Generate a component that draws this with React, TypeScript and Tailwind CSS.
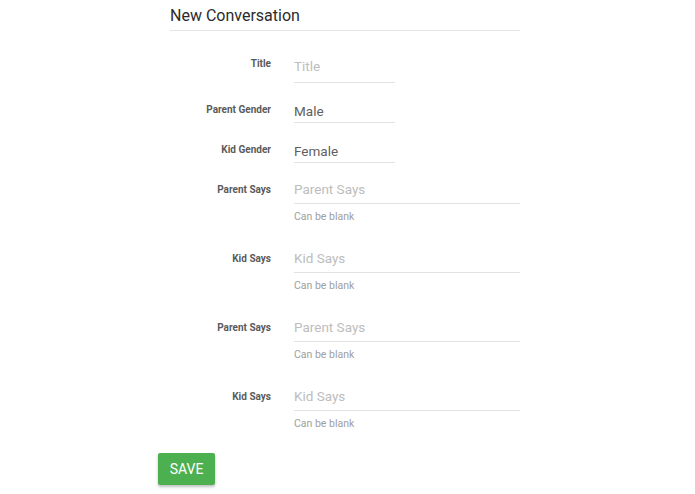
import React from 'react';

interface FieldProps {
  label: string;
  text: string;
  filled?: boolean;
  wide?: boolean;
  hint?: string;
  boxClass: string;
  labelClass: string;
  rowClass: string;
}

const Field: React.FC<FieldProps> = ({ label, text, filled, wide, hint, boxClass, labelClass, rowClass }) => (
  <div className={`flex items-start ${rowClass}`}>
    <div className={`w-[113px] text-right text-[10px] leading-[14px] font-bold text-[#5a5a5a] ${labelClass}`}>
      {label}
    </div>
    <div className="ml-[23px]">
      <div
        className={`${wide ? 'w-[226px]' : 'w-[101px]'} ${boxClass} flex items-center border-b border-[#e2e2e2] text-[13.5px] ${
          filled ? 'text-[#5f5f5f]' : 'text-[#bdbdbd]'
        }`}
      >
        {text}
      </div>
      {hint && <div className="mt-[6px] text-[10.5px] leading-[14px] text-[#9e9e9e]">{hint}</div>}
    </div>
  </div>
);

export default function App() {
  return (
    <div className="w-[695px] h-[494px] bg-white" style={{ fontFamily: 'Roboto, "Noto Sans", sans-serif' }}>
      <div className="ml-[158px] w-[362px]">
        <div className="h-[31px] ml-3 pt-[5px] leading-[22px] text-[16px] text-[#2b2b2b] border-b border-[#e5e5e5]">
          New Conversation
        </div>

        <Field label="Title" text="Title" rowClass="mt-[19px]" boxClass="h-[33px]" labelClass="pt-[7px]" />
        <Field label="Parent Gender" text="Male" filled rowClass="mt-[17px]" boxClass="h-[23px]" labelClass="pt-[3px]" />
        <Field label="Kid Gender" text="Female" filled rowClass="mt-[17px]" boxClass="h-[23px]" labelClass="pt-[3px]" />
        <Field label="Parent Says" text="Parent Says" wide hint="Can be blank" rowClass="mt-[12px]" boxClass="h-[29px]" labelClass="pt-[8px]" />
        <Field label="Kid Says" text="Kid Says" wide hint="Can be blank" rowClass="mt-[20px]" boxClass="h-[29px]" labelClass="pt-[8px]" />
        <Field label="Parent Says" text="Parent Says" wide hint="Can be blank" rowClass="mt-[20px]" boxClass="h-[29px]" labelClass="pt-[8px]" />
        <Field label="Kid Says" text="Kid Says" wide hint="Can be blank" rowClass="mt-[20px]" boxClass="h-[29px]" labelClass="pt-[8px]" />

        <button className="mt-[22px] w-[57px] h-[32px] rounded-[2px] bg-[#4caf50] text-white text-[14px] shadow-[0_2px_3px_rgba(0,0,0,0.25)]">
          SAVE
        </button>
      </div>
    </div>
  );
}
